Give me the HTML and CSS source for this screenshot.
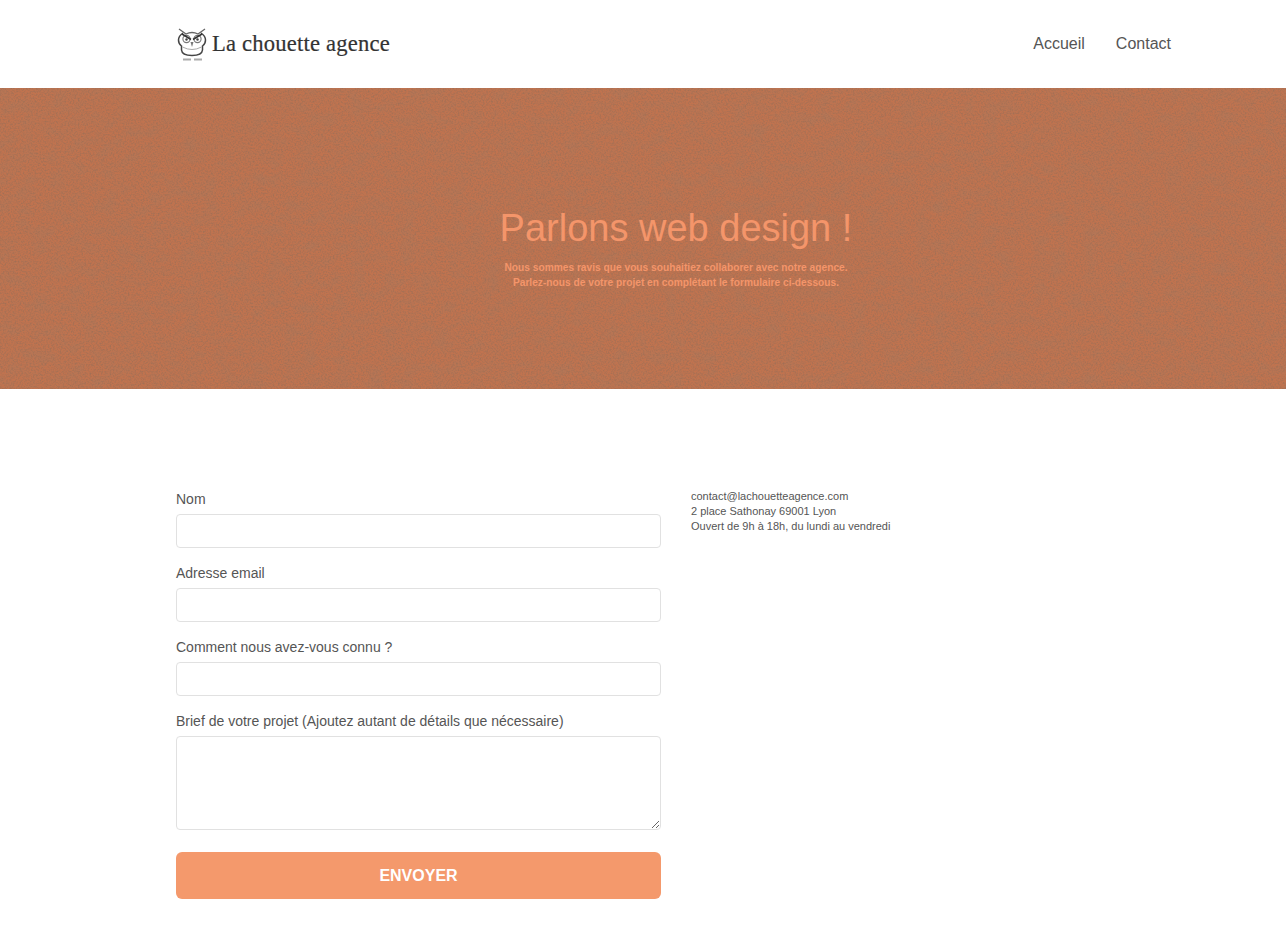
FILE: index.html
```html
<!DOCTYPE html>
<html lang="fr">
<head>
    <meta charset="UTF-8">
    <title>La chouette agence - Contact</title>
    <link rel="stylesheet" href="styles.css">
</head>
<body>
    <header class="topbar">
        <a class="logo" href="#">
            <svg class="logo-owl" width="34" height="36" viewBox="0 0 34 36" fill="none">
                <path d="M3 3 L10 8 Q16 5 22 8 L29 3" stroke="#666" stroke-width="1.3"/>
                <path d="M7 7 Q2.5 10 2.5 14 Q2.5 18 5.5 20 L5.5 24 Q6 29.5 16 29.5 Q26 29.5 26.5 24 L26.5 20 Q29.5 18 29.5 14 Q29.5 10 25 7" stroke="#444" stroke-width="1.5"/>
                <path d="M6.5 21 Q16 26 25.5 21" stroke="#aaa" stroke-width="1"/>
                <circle cx="10.5" cy="13" r="3.6" stroke="#777" stroke-width="1.1"/>
                <circle cx="21.5" cy="13" r="3.6" stroke="#777" stroke-width="1.1"/>
                <circle cx="10.5" cy="13.5" r="1.2" fill="#444"/>
                <circle cx="21.5" cy="13.5" r="1.2" fill="#444"/>
                <path d="M6 8 L15 13.5 M26 8 L17 13.5" stroke="#333" stroke-width="1.5"/>
                <path d="M14.5 16 L16 21 L17.5 16 Z" fill="#777"/>
                <path d="M7 33.5 H15 M18 33.5 H26" stroke="#aaa" stroke-width="2"/>
            </svg>
            <span class="logo-name">La chouette agence</span>
        </a>
        <nav class="menu">
            <a href="#">Accueil</a>
            <a href="#">Contact</a>
        </nav>
    </header>

    <section class="hero">
        <svg class="hero-grain" width="100%" height="100%" aria-hidden="true">
            <filter id="mottle" x="0" y="0" width="100%" height="100%">
                <feTurbulence type="fractalNoise" baseFrequency="0.06 0.08" numOctaves="3" seed="11"/>
                <feColorMatrix type="matrix" values="0 0 0 0 0.40  0 0 0 0 0.19  0 0 0 0 0.11  1.0 0 0 0 -0.40"/>
            </filter>
            <filter id="grain" x="0" y="0" width="100%" height="100%">
                <feTurbulence type="fractalNoise" baseFrequency="0.6" numOctaves="2" seed="7"/>
                <feColorMatrix type="matrix" values="0 0 0 0 0.36  0 0 0 0 0.16  0 0 0 0 0.09  2.2 0 0 0 -0.88"/>
            </filter>
            <rect width="100%" height="100%" filter="url(#mottle)"/>
            <rect width="100%" height="100%" filter="url(#grain)"/>
        </svg>
        <div class="hero-text">
            <h1>Parlons web design !</h1>
            <p>Nous sommes ravis que vous souhaitiez collaborer avec notre agence.<br>Parlez-nous de votre projet en complétant le formulaire ci-dessous.</p>
        </div>
    </section>

    <main class="content">
        <form class="contact-form">
            <label class="field-label" for="nom">Nom</label>
            <input class="field" id="nom" type="text">

            <label class="field-label" for="email">Adresse email</label>
            <input class="field" id="email" type="email">

            <label class="field-label" for="connu">Comment nous avez-vous connu ?</label>
            <input class="field" id="connu" type="text">

            <label class="field-label" for="brief">Brief de votre projet (Ajoutez autant de détails que nécessaire)</label>
            <textarea class="field field-area" id="brief"></textarea>

            <button class="send" type="button">ENVOYER</button>
        </form>
        <aside class="details">
            contact@lachouetteagence.com<br>
            2 place Sathonay 69001 Lyon<br>
            Ouvert de 9h à 18h, du lundi au vendredi
        </aside>
    </main>
</body>
</html>
```

FILE: styles.css
```css
* {
    box-sizing: border-box;
}

body {
    margin: 0;
    background-color: #fff;
    font-family: "Liberation Sans", Arial, sans-serif;
    color: #555;
}

a {
    color: inherit;
    text-decoration: none;
}

.topbar {
    height: 88px;
    padding: 0 115px 0 176px;
    display: flex;
    justify-content: space-between;
    align-items: center;
}

.logo {
    display: flex;
    align-items: center;
    gap: 2px;
    color: #333;
}

.logo-name {
    font-family: "Liberation Serif", serif;
    font-size: 22.6px;
    letter-spacing: 0.2px;
    -webkit-text-stroke: 0.2px #333;
}

.menu {
    display: flex;
    gap: 31px;
    font-size: 16px;
}

.hero {
    position: relative;
    height: 301px;
    background-color: #c0734f;
    display: flex;
    justify-content: center;
    align-items: center;
    overflow: hidden;
}

.hero-grain {
    position: absolute;
    top: 0;
    left: 0;
}

.hero-text {
    position: relative;
    margin: 18px 0 0 66px;
    text-align: center;
    color: #f4956a;
}

.hero-text h1 {
    margin: 0 0 9px;
    font-size: 38px;
    font-weight: 400;
    line-height: 46px;
}

.hero-text p {
    margin: 0;
    font-size: 10.2px;
    font-weight: 700;
    line-height: 15px;
}

.content {
    padding: 100px 115px 33px 176px;
    display: flex;
    gap: 30px;
    align-items: flex-start;
}

.contact-form {
    width: 485px;
    padding-top: 1px;
    display: flex;
    flex-direction: column;
}

.field-label {
    font-size: 14px;
    line-height: 18px;
    margin-bottom: 6px;
}

.field {
    height: 34px;
    margin-bottom: 16px;
    padding: 6px 10px;
    background-color: #fff;
    border: 1px solid #e1e1e1;
    border-radius: 4px;
}

.field-area {
    height: 94px;
    margin-bottom: 22px;
    display: block;
}

.send {
    height: 47px;
    border: 0;
    border-radius: 6px;
    background-color: #f4996c;
    color: #fff;
    font-family: inherit;
    font-size: 16px;
    font-weight: 700;
}

.details {
    font-size: 11px;
    line-height: 15px;
}
```
